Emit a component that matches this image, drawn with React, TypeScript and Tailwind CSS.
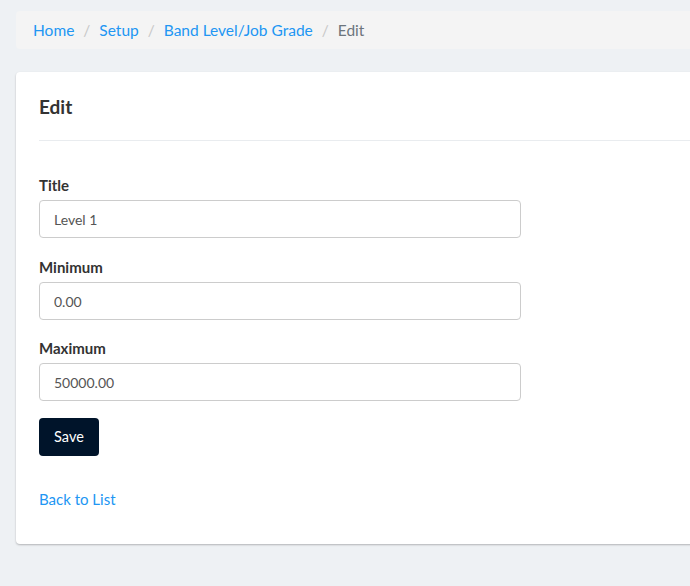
import React from "react"

const crumbs = ["Home", "Setup", "Band Level/Job Grade"]

const fields = [
  { label: "Title", value: "Level 1" },
  { label: "Minimum", value: "0.00" },
  { label: "Maximum", value: "50000.00" },
]

export default function App() {
  return (
    <div className="min-h-[586px] overflow-hidden bg-[#eef1f4] pl-4 pt-[11px] font-['Lato',sans-serif]">
      <div className="w-[720px]">
        <nav className="flex h-[38px] items-center rounded-l bg-[#f4f4f4] pl-[17px] pt-[2px] text-[15.5px]">
          {crumbs.map((c) => (
            <React.Fragment key={c}>
              <a href="#" className="text-[#2196f3]">
                {c}
              </a>
              <span className="px-[9px] text-[#c8c8c8]">/</span>
            </React.Fragment>
          ))}
          <span className="text-[#6c757d]">Edit</span>
        </nav>

        <div className="mt-[23px] rounded bg-white px-[23px] pb-[33px] shadow-[0_1px_2px_rgba(0,0,0,0.25)]">
          <h2 className="flex h-[69px] items-center border-b border-[#e9ecef] pt-[2px] text-[19px] font-bold text-[#333]">
            Edit
          </h2>

          <form className="pt-[34px]">
            {fields.map((f, i) => (
              <div key={f.label} className={i === 0 ? "mb-[19px]" : "mb-[18px]"}>
                <label className="mb-[5px] block text-[15px] leading-[20px] font-bold text-[#333]">
                  {f.label}
                </label>
                <input
                  defaultValue={f.value}
                  className="h-[38px] w-[482px] rounded border border-[#ccc] bg-white px-[14px] text-[14px] text-[#555] outline-none"
                />
              </div>
            ))}
            <button
              type="button"
              className="-mt-[1px] h-[38px] w-[60px] rounded bg-[#00142a] text-[14.5px] text-white"
            >
              Save
            </button>
          </form>

          <div className="mt-[31px]">
            <a href="#" className="text-[15px] text-[#2196f3]">
              Back to List
            </a>
          </div>
        </div>
      </div>
    </div>
  )
}
